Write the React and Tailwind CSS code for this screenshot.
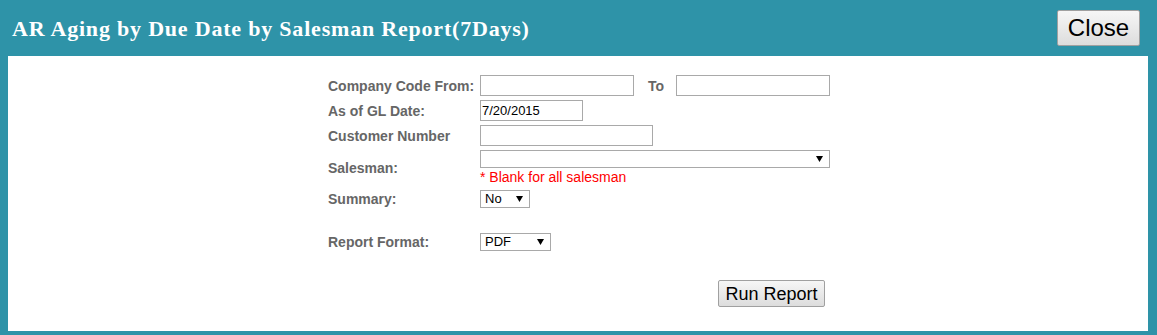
import React from "react";

const arial = { fontFamily: '"Liberation Sans", Arial, sans-serif' };

function Arrow() {
  return (
    <svg width="7" height="6" viewBox="0 0 7 6" className="shrink-0">
      <path d="M0 0 H7 L3.5 6 Z" fill="#000" />
    </svg>
  );
}

function Select({ value, className }) {
  return (
    <div
      className={`flex items-center justify-between border border-[#a9a9a9] bg-white pl-[4px] pr-[6px] text-[13px] text-black leading-none ${className}`}
    >
      <span>{value}</span>
      <Arrow />
    </div>
  );
}

function Label({ children }) {
  return (
    <div className="w-[152px] shrink-0 text-[14px] font-bold text-[#666666] leading-none">
      {children}
    </div>
  );
}

export default function App() {
  return (
    <div
      className="w-[1157px] h-[335px] bg-[#2e93a8] flex flex-col"
      style={arial}
    >
      <div className="h-[56px] flex items-center justify-between pl-[12px] pr-[17px]">
        <div
          className="text-white font-bold text-[22px] leading-none pt-[2px] tracking-[0.8px]"
          style={{ fontFamily: '"Liberation Serif", "Times New Roman", serif' }}
        >
          AR Aging by Due Date by Salesman Report(7Days)
        </div>
        <button className="w-[83px] h-[36px] border border-[#a0a0a0] rounded-[2px] bg-gradient-to-b from-[#f6f6f6] to-[#dddddd] text-[24px] text-black leading-none">
          Close
        </button>
      </div>
      <div className="flex-1 ml-[8px] mr-[9px] mb-[4px] bg-white pl-[2px]">
        <div className="w-[502px] mx-auto pt-[17px] flex flex-col">
          <div className="h-[25px] flex items-center">
            <Label>Company Code From:</Label>
            <div className="w-[154px] h-[21px] border border-[#a9a9a9]" />
            <div className="w-[42px] pl-[14px] text-[14px] font-bold text-[#666666] leading-none">
              To
            </div>
            <div className="w-[154px] h-[21px] border border-[#a9a9a9]" />
          </div>
          <div className="h-[25px] flex items-center">
            <Label>As of GL Date:</Label>
            <div className="w-[103px] h-[21px] border border-[#a9a9a9] flex items-center pl-[1px] text-[13px] text-black leading-none">
              7/20/2015
            </div>
          </div>
          <div className="h-[25px] flex items-center">
            <Label>Customer Number</Label>
            <div className="w-[173px] h-[21px] border border-[#a9a9a9]" />
          </div>
          <div className="h-[40px] flex items-center">
            <Label>Salesman:</Label>
            <div className="flex flex-col">
              <Select value="" className="w-[350px] h-[18px]" />
              <div className="text-[14px] text-[#ff0000] leading-[17px] pt-[1px]">
                * Blank for all salesman
              </div>
            </div>
          </div>
          <div className="h-[21px] flex items-center">
            <Label>Summary:</Label>
            <Select value="No" className="w-[50px] h-[18px]" />
          </div>
          <div className="h-[22px]" />
          <div className="h-[21px] flex items-center">
            <Label>Report Format:</Label>
            <Select value="PDF" className="w-[71px] h-[18px]" />
          </div>
          <div className="flex justify-end pr-[5px] pt-[28px]">
            <button className="w-[107px] h-[27px] border border-[#a0a0a0] rounded-[2px] bg-gradient-to-b from-[#f6f6f6] to-[#dddddd] text-[18px] text-black leading-none">
              Run Report
            </button>
          </div>
        </div>
      </div>
    </div>
  );
}
